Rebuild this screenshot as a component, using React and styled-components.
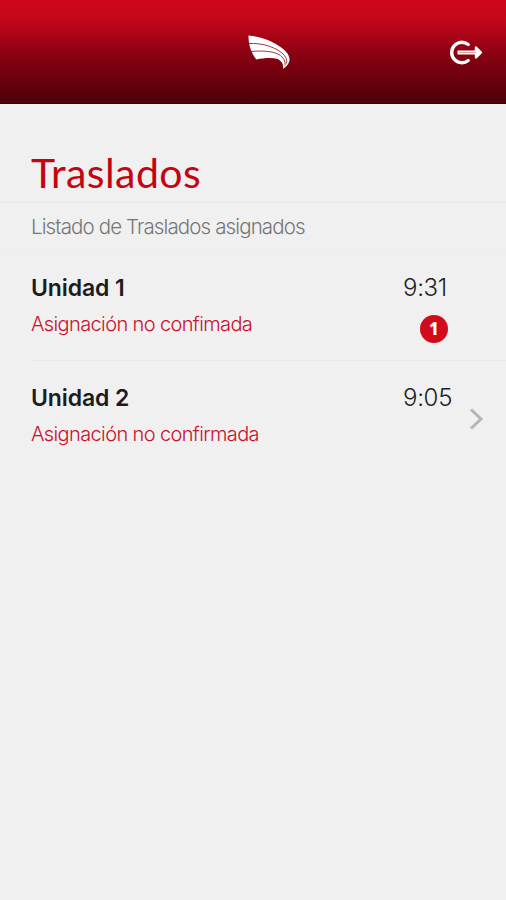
import styled, { createGlobalStyle } from 'styled-components';

const GlobalStyle = createGlobalStyle`
    body {
        margin: 0;
        background: #f0f0f0;
        font-family: Inter, 'Liberation Sans', sans-serif;
    }
`;

const Screen = styled.div`
    width: 506px;
    height: 900px;
    overflow: hidden;
    background: #f0f0f0;
`;

const Header = styled.header`
    display: grid;
    grid-template-columns: 1fr 44px 1fr;
    align-items: center;
    height: 104px;
    box-sizing: border-box;
    padding: 3px 22px 0 54px;
    border-bottom: 1px solid #2c0207;
    background: linear-gradient(#cf071c 0%, #c5071b 18%, #8b0212 52%, #4d0009 100%);
`;

const Logo = styled.svg`
    grid-column: 2;
    display: block;
    width: 44px;
    height: 36px;
`;

const LogoutButton = styled.button`
    justify-self: end;
    display: flex;
    padding: 0;
    border: 0;
    background: none;
`;

const TitleBar = styled.div`
    height: 99px;
    box-sizing: border-box;
    padding: 43px 31px 0;
    border-bottom: 1px solid #e9e9e9;
`;

const Title = styled.h1`
    margin: 0;
    font-family: Lato, sans-serif;
    font-size: 41px;
    font-weight: 400;
    line-height: 52px;
    letter-spacing: 0.4px;
    color: #c4040f;
`;

const Subtitle = styled.p`
    height: 48px;
    box-sizing: border-box;
    margin: 0;
    padding: 0 31px;
    border-bottom: 1px solid #ededed;
    font-size: 20.5px;
    font-weight: 300;
    line-height: 47px;
    letter-spacing: -0.88px;
    color: #777;
`;

const Row = styled.div`
    display: flex;
    height: 110px;
    box-sizing: border-box;
    margin-left: 31px;
    padding: 23px 19px 0 0;
    border-bottom: 1px solid ${({ $last }) => ($last ? 'transparent' : '#e9e9e9')};
`;

const Info = styled.div`
    width: 372px;
`;

const Name = styled.h2`
    margin: 0;
    font-size: 23px;
    font-weight: 600;
    line-height: 28px;
    letter-spacing: -0.1px;
    color: #1c1c1c;
`;

const Status = styled.p`
    margin: 9px 0 0;
    font-size: 20px;
    font-weight: 300;
    line-height: 26px;
    letter-spacing: -0.62px;
    color: #c8102e;
`;

const Side = styled.div`
    display: flex;
    flex-direction: column;
    width: 65px;
`;

const Time = styled.span`
    font-size: 24px;
    font-weight: 300;
    line-height: 27px;
    letter-spacing: -0.3px;
    color: #222;
`;

const Badge = styled.span`
    width: 28px;
    height: 28px;
    margin: 14px 0 0 17px;
    border-radius: 50%;
    background: #d20a1b;
    color: #fff;
    font-family: 'Noto Sans', sans-serif;
    font-size: 17px;
    font-weight: 800;
    line-height: 28px;
    text-align: center;
`;

const Arrow = styled.svg`
    display: block;
    width: 16px;
    height: 24px;
    margin-top: 23px;
`;

const transfers = [
    { name: 'Unidad 1', status: 'Asignación no confimada', time: '9:31', count: 1 },
    { name: 'Unidad 2', status: 'Asignación no confirmada', time: '9:05' },
];

const WingLogo = () => (
    <Logo viewBox="0 0 44 36">
        <path
            fill="#fff"
            d="M1.500 0.500C14 1.500 26 6 35 13C40 17 43 21 42.500 25.500C42 28.500 39.500 31.500 36 34C37 30 35 26.500 31 24C25 22.500 17 23 9.500 24.500C4 18 1.500 10 1.500 0.500Z"
        />
        <g fill="none" stroke="#8b2430">
            <path d="M2 8.500C14 8 25 11 33 16.500C38 20 40.500 24 39.500 28.500" strokeWidth="0.9" />
            <path d="M4 16.500C15 15.500 25 16 32 19.500C36.500 22.500 38.500 26 38 30.500" strokeWidth="0.9" />
        </g>
    </Logo>
);

const Navbar = () => (
    <Header>
        <WingLogo />
        <LogoutButton aria-label="Salir">
            <svg width="35" height="26" viewBox="0 0 35 26" fill="none" stroke="#fff">
                <path d="M19.200 4.500A10.200 10.200 0 1 0 19.200 20.500" strokeWidth="3.4" strokeLinecap="round" />
                <path d="M8.500 12.500H31" strokeWidth="4" />
                <path d="M27 7.500L32 12.500L27 17.500Z" fill="#fff" strokeWidth="2.400" strokeLinejoin="round" />
                <path d="M10 12.500H27" stroke="#c98a92" strokeWidth="0.8" />
            </svg>
        </LogoutButton>
    </Header>
);

const App = () => (
    <Screen>
        <GlobalStyle />
        <Navbar />
        <TitleBar>
            <Title>Traslados</Title>
        </TitleBar>
        <Subtitle>Listado de Traslados asignados</Subtitle>
        {transfers.map(({ name, status, time, count }, i) => (
            <Row key={name} $last={i === transfers.length - 1}>
                <Info>
                    <Name>{name}</Name>
                    <Status>{status}</Status>
                </Info>
                <Side>
                    <Time>{time}</Time>
                    {count && <Badge>{count}</Badge>}
                </Side>
                {!count && (
                    <Arrow viewBox="0 0 16 24" fill="none" stroke="#b5b5b5" strokeWidth="3">
                        <path d="M3 2.500L13 12L3 21.500" />
                    </Arrow>
                )}
            </Row>
        ))}
    </Screen>
);

export default App;
